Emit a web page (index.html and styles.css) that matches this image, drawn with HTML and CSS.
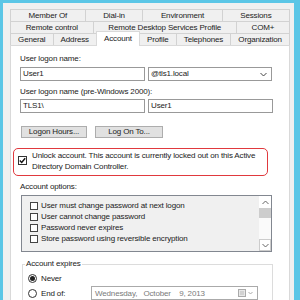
FILE: index.html
```html
<!DOCTYPE html>
<html lang="en">
<head>
    <meta charset="UTF-8">
    <title>User Properties - Account</title>
    <link rel="stylesheet" href="styles.css">
</head>
<body>

    <div class="window">
        <div class="tab-row">
            <div class="tab">Member Of</div>
            <div class="tab">Dial-in</div>
            <div class="tab">Environment</div>
            <div class="tab">Sessions</div>
        </div>
        <div class="tab-row">
            <div class="tab">Remote control</div>
            <div class="tab">Remote Desktop Services Profile</div>
            <div class="tab">COM+</div>
        </div>
        <div class="tab-row">
            <div class="tab">General</div>
            <div class="tab">Address</div>
            <div class="tab active">Account</div>
            <div class="tab">Profile</div>
            <div class="tab">Telephones</div>
            <div class="tab">Organization</div>
        </div>

        <div class="panel">
            <div class="label first">User logon name:</div>
            <div class="field-row">
                <div class="input">User1</div>
                <div class="input combo">
                    <span>@tls1.local</span>
                    <svg width="7" height="5" viewBox="0 0 7 5"><path d="M0.5 1 L3.5 4 L6.5 1" fill="none" stroke="#444" stroke-width="1"/></svg>
                </div>
            </div>
            <div class="label">User logon name (pre-Windows 2000):</div>
            <div class="field-row">
                <div class="input">TLS1\</div>
                <div class="input">User1</div>
            </div>

            <div class="button-row">
                <div class="btn hours">Logon Hours...</div>
                <div class="btn logon">Log On To...</div>
            </div>

            <div class="notice">
                <span class="check checked">
                    <svg width="7" height="7" viewBox="0 0 7 7"><path d="M0.8 3.6 L2.7 5.5 L6.2 1.2" fill="none" stroke="#111" stroke-width="1.4"/></svg>
                </span>
                <div class="notice-text">Unlock account. This account is currently locked out on this Active Directory Domain Controller.</div>
            </div>

            <div class="label options">Account options:</div>
            <div class="listbox">
                <div class="list-items">
                    <div class="list-item"><span class="check"></span>User must change password at next logon</div>
                    <div class="list-item"><span class="check"></span>User cannot change password</div>
                    <div class="list-item"><span class="check"></span>Password never expires</div>
                    <div class="list-item"><span class="check"></span>Store password using reversible encryption</div>
                </div>
                <div class="scrollbar">
                    <div class="arrow">
                        <svg width="7" height="5" viewBox="0 0 7 5"><path d="M0.5 4 L3.5 1 L6.5 4" fill="none" stroke="#666" stroke-width="1"/></svg>
                    </div>
                    <div class="thumb"></div>
                    <div class="track"></div>
                    <div class="arrow down">
                        <svg width="7" height="5" viewBox="0 0 7 5"><path d="M0.5 1 L3.5 4 L6.5 1" fill="none" stroke="#666" stroke-width="1"/></svg>
                    </div>
                </div>
            </div>

            <div class="group">
                <div class="group-title">Account expires</div>
                <div class="radio-row">
                    <span class="radio selected"></span>
                    <span>Never</span>
                </div>
                <div class="radio-row">
                    <span class="radio"></span>
                    <span class="endof">End of:</span>
                    <div class="datepicker">
                        <span>Wednesday,&nbsp;&nbsp; October&nbsp;&nbsp;&nbsp; 9, 2013</span>
                        <span class="cal">
                            <svg width="8" height="8" viewBox="0 0 8 8"><rect x="0.5" y="0.5" width="7" height="7" fill="#e8e8e8" stroke="#aaa"/><path d="M2 3h4M2 5h4" stroke="#bbb"/></svg>
                            <svg width="5" height="4" viewBox="0 0 5 4"><path d="M0.5 1 L2.5 3 L4.5 1" fill="none" stroke="#aaa"/></svg>
                        </span>
                    </div>
                </div>
            </div>
        </div>
    </div>

</body>
</html>
```

FILE: styles.css
```css
* {
    margin: 0;
    padding: 0;
    box-sizing: border-box;
}
body {
    width: 300px;
    height: 300px;
    overflow: hidden;
    background-color: #5bc6e6;
    font-family: "Liberation Sans", Arial, sans-serif;
    font-size: 8px;
    letter-spacing: -0.15px;
    color: #222;
}
.window {
    margin: 3px 6px 0 3px;
    height: 297px;
    overflow: hidden;
    padding: 6px 4px 0 7px;
    background: #f0f0f0;
}
.tab-row {
    display: flex;
    height: 12px;
}
.tab {
    flex: 1 1 auto;
    padding: 0 4px;
    margin-left: -1px;
    border: 1px solid #d2d2d2;
    border-bottom: none;
    background: #f0f0f0;
    text-align: center;
    line-height: 11px;
    white-space: nowrap;
}
.tab:first-child {
    margin-left: 0;
}
.tab.active {
    position: relative;
    z-index: 1;
    margin-top: -2px;
    height: 15px;
    background: #fff;
    border-color: #d9d9d9;
    line-height: 13px;
}
.panel {
    height: 256px;
    padding: 0 0 0 9px;
    background: #fff;
    border: 1px solid #d9d9d9;
}
.label {
    height: 10px;
    margin-top: 6px;
    line-height: 10px;
}
.label.first {
    margin-top: 8px;
}
.field-row {
    display: flex;
    gap: 3px;
    margin-top: 2px;
}
.label.first + .field-row {
    margin-top: 3px;
}
.input {
    width: 125px;
    height: 14px;
    padding-left: 2px;
    border: 1px solid #999;
    line-height: 12px;
}
.combo {
    width: 124px;
    display: flex;
    justify-content: space-between;
    align-items: center;
    padding-right: 4px;
}
.button-row {
    display: flex;
    gap: 8px;
    margin-top: 13px;
    margin-left: 1px;
}
.btn {
    height: 12px;
    border: 1px solid #adadad;
    background: #e1e1e1;
    text-align: center;
    line-height: 10px;
}
.hours {
    width: 66px;
}
.logon {
    width: 68px;
}
.notice {
    display: flex;
    align-items: flex-start;
    gap: 5px;
    width: 255px;
    height: 28px;
    margin: 10px 0 0 -7px;
    padding: 2px 4px 0 4px;
    border: 1.5px solid #e0393e;
    border-radius: 5px;
}
.notice .check {
    margin-top: 5px;
}
.notice-text {
    line-height: 10.5px;
}
.check {
    flex: none;
    display: flex;
    align-items: center;
    justify-content: center;
    width: 8px;
    height: 8px;
    border: 1px solid #333;
    background: #fff;
}
.check.checked {
    width: 9px;
    height: 9px;
}
.label.options {
    margin-top: 6px;
}
.listbox {
    display: flex;
    width: 251px;
    height: 57px;
    margin: 3px 0 0 1px;
    border: 1px solid #828790;
    background: #f0f0f0;
}
.list-items {
    flex: 1;
    padding: 4px 0 0 8px;
}
.list-item {
    display: flex;
    align-items: center;
    gap: 3px;
    height: 11px;
    white-space: nowrap;
}
.list-item .check {
    border-color: #444;
}
.scrollbar {
    display: flex;
    flex-direction: column;
    width: 12px;
    background: #fafafa;
}
.arrow {
    display: flex;
    align-items: center;
    justify-content: center;
    height: 12px;
    background: #fff;
}
.arrow.down {
    border: 1px solid #ccc;
}
.thumb {
    height: 10px;
    background: #cdcdcd;
}
.track {
    flex: 1;
}
.group {
    width: 251px;
    height: 40px;
    margin: 12px 0 0 2px;
    padding: 0 0 0 5px;
    border: 1px solid #dcdcdc;
}
.group-title {
    width: fit-content;
    height: 10px;
    margin: -6px 0 0 -3px;
    padding: 0 1px;
    background: #fff;
    line-height: 10px;
}
.radio-row {
    display: flex;
    align-items: center;
    gap: 4px;
    height: 10px;
    margin-top: 4px;
}
.radio-row + .radio-row {
    margin-top: 3px;
    height: 14px;
}
.radio {
    flex: none;
    display: flex;
    align-items: center;
    justify-content: center;
    width: 9px;
    height: 9px;
    border: 1px solid #333;
    border-radius: 50%;
}
.radio.selected::after {
    content: "";
    width: 5px;
    height: 5px;
    border-radius: 50%;
    background: #222;
}
.endof {
    width: 46px;
}
.datepicker {
    display: flex;
    align-items: center;
    justify-content: space-between;
    width: 167px;
    height: 14px;
    padding: 0 4px 0 3px;
    border: 1px solid #aaa;
    color: #7a7a7a;
}
.cal {
    display: flex;
    align-items: center;
    gap: 2px;
}
```
